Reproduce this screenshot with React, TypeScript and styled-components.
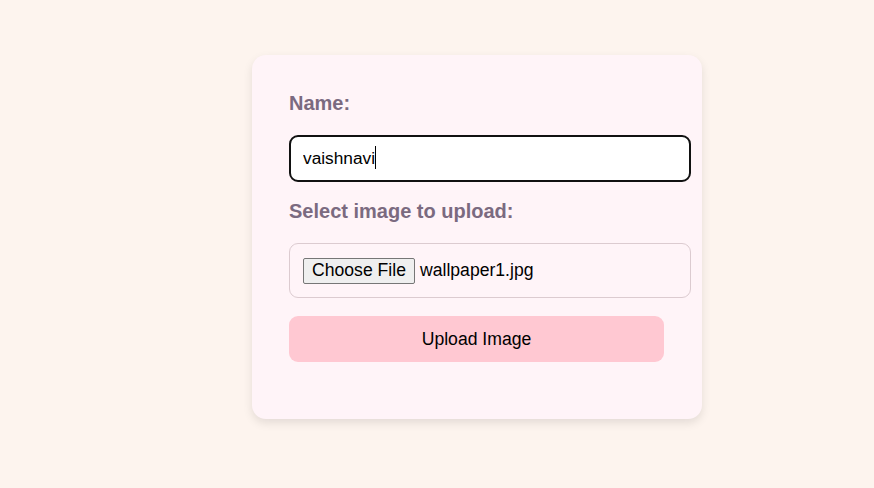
import React from "react";
import styled, { createGlobalStyle } from "styled-components";

const Global = createGlobalStyle`
  html, body { margin: 0; padding: 0; background: #fdf4ee; }
  body { font-family: "Liberation Sans", Arial, sans-serif; }
  * { box-sizing: border-box; }
`;

const Page = styled.div`
  min-height: 488px;
  padding: 55px 0 0 252px;
`;

const Card = styled.form`
  width: 450px;
  height: 364px;
  background: #fff4f8;
  border-radius: 14px;
  box-shadow: 0 4px 10px rgba(0, 0, 0, 0.1);
  padding: 37px 11px 0 37px;
  display: flex;
  flex-direction: column;
`;

const Label = styled.label<{ $gap: number }>`
  font-size: 20px;
  font-weight: bold;
  color: #7b6a80;
  line-height: 23px;
  margin-bottom: ${(p) => p.$gap}px;
`;

const InputWrap = styled.div`
  position: relative;
  width: 402px;
  margin-bottom: 18px;
`;

const NameInput = styled.input`
  display: block;
  width: 402px;
  height: 47px;
  border: 2px solid #111;
  border-radius: 9px;
  background: #fff;
  padding: 0 12px;
  font-family: "Liberation Sans", Arial, sans-serif;
  font-size: 17.3px;
  color: #000;
  outline: none;
  caret-color: transparent;
`;

const Caret = styled.span`
  position: absolute;
  left: 86px;
  top: 11px;
  width: 1px;
  height: 23px;
  background: #000;
`;

const FileBox = styled.div`
  width: 402px;
  height: 55px;
  border: 1px solid #dccbd0;
  border-radius: 9px;
  padding: 0 13px;
  display: flex;
  align-items: center;
  gap: 5px;
  margin-bottom: 18px;
  font-size: 17.6px;
  color: #000;
`;

const ChooseButton = styled.span`
  display: inline-flex;
  align-items: center;
  justify-content: center;
  width: 112px;
  height: 26px;
  background: #efefef;
  border: 1px solid #767676;
  border-radius: 2px;
  font-size: 17.6px;
`;

const UploadButton = styled.button`
  width: 375px;
  height: 46px;
  border: none;
  border-radius: 9px;
  background: #ffc8d2;
  font-family: "Liberation Sans", Arial, sans-serif;
  font-size: 17.6px;
  color: #000;
  cursor: pointer;
`;

export default function App() {
  return (
    <>
      <Global />
      <Page>
        <Card onSubmit={(e) => e.preventDefault()}>
          <Label $gap={20} htmlFor="name">Name:</Label>
          <InputWrap>
            <NameInput id="name" defaultValue="vaishnavi" />
            <Caret />
          </InputWrap>
          <Label $gap={20}>Select image to upload:</Label>
          <FileBox>
            <ChooseButton>Choose File</ChooseButton>
            <span>wallpaper1.jpg</span>
          </FileBox>
          <UploadButton type="submit">Upload Image</UploadButton>
        </Card>
      </Page>
    </>
  );
}
